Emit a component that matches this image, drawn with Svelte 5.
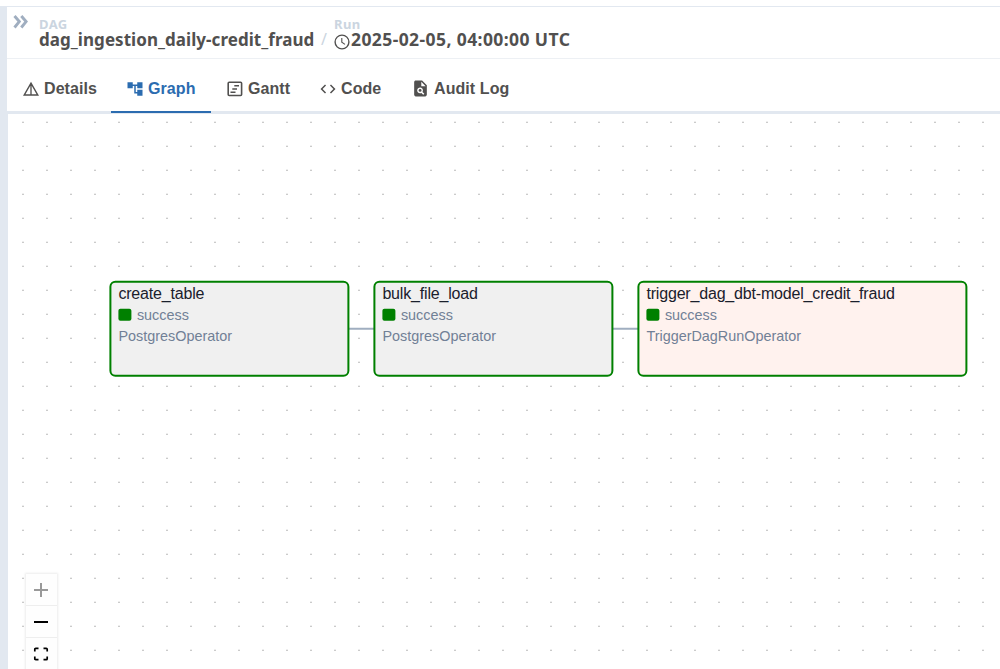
<script>
  const tabs = [
    { id: 'details', label: 'Details' },
    { id: 'graph', label: 'Graph' },
    { id: 'gantt', label: 'Gantt' },
    { id: 'code', label: 'Code' },
    { id: 'audit', label: 'Audit Log' },
  ];
  const active = 'graph';
  const nodes = [
    { id: 'create_table', op: 'PostgresOperator', x: 101, w: 240, bg: '#f0f0f0' },
    { id: 'bulk_file_load', op: 'PostgresOperator', x: 365, w: 240, bg: '#f0f0f0' },
    { id: 'trigger_dag_dbt-model_credit_fraud', op: 'TriggerDagRunOperator', x: 629, w: 330, bg: '#fff2ee' },
  ];
</script>

<div class="page">
  <div class="shell">
    <header>
      <svg class="expand" width="16" height="14" viewBox="0 0 16 14" fill="none" stroke="#a0aec0" stroke-width="2.9">
        <path d="M1.5 1L6.3 6.6L1.5 12.5M8.3 1L13.1 6.6L8.3 12.5" />
      </svg>
      <div class="crumb dag">
        <span class="kind">DAG</span>
        <span class="value name">dag_ingestion_daily-credit_fraud</span>
      </div>
      <span class="slash">/</span>
      <div class="crumb run">
        <span class="kind">Run</span>
        <span class="value">
          <svg class="clock" width="16" height="16" viewBox="0 0 16 16" fill="none" stroke="#51504f">
            <circle cx="8" cy="8" r="6.9" stroke-width="1.4" />
            <path d="M7.8 4V8.3L11 10.4" stroke-width="1.1" />
          </svg><span class="time">2025-02-05, 04:00:00 UTC</span>
        </span>
      </div>
    </header>

    <nav>
      {#each tabs as tab}
        <div class="tab {tab.id}" class:active={tab.id === active}>
          {#if tab.id === 'details'}
            <svg width="16" height="16" viewBox="0 0 24 24" fill="currentColor"><path d="M12 1L0 22h24L12 1zm-1 6v13H3.7L11 7zm2 0l7.3 13H13V7z" /></svg>
          {:else if tab.id === 'graph'}
            <svg width="18" height="18" viewBox="0 0 24 24" fill="currentColor"><path d="M22 11V3h-7v3H9V3H2v8h7V8h2v10h4v3h7v-8h-7v3h-2V8h2v3z" /></svg>
          {:else if tab.id === 'gantt'}
            <svg width="16" height="16" viewBox="0 0 16 16" fill="none" stroke="currentColor" stroke-width="1.6"><rect x="1.2" y="1.3" width="13.4" height="13.2" rx="1" /><path d="M7.3 4.8H12M5.3 8H10M3.5 11.2H8.5" stroke-width="1.5" /></svg>
          {:else if tab.id === 'code'}
            <svg width="18" height="18" viewBox="0 0 24 24" fill="currentColor"><path d="M9.4 16.6L4.8 12l4.6-4.6L8 6l-6 6 6 6 1.4-1.4zm5.2 0l4.6-4.6-4.6-4.6L16 6l6 6-6 6-1.4-1.4z" /></svg>
          {:else}
            <svg width="19" height="19" viewBox="0 0 24 24" fill="currentColor"><path fill-rule="evenodd" d="M14 2H6c-1.1 0-2 .9-2 2v16c0 1.1.9 2 2 2h12c1.1 0 2-.9 2-2V8l-6-6zm1.4 18l-2.3-2.3c-1.6.8-3.5.4-4.5-1-1.2-1.5-1-3.8.4-5 1.6-1.4 3.9-1.2 5.2.3 1 1.3 1.1 3 .3 4.3l2.4 2.3-1.5 1.4zM13 9V3.500L18.500 9H13z" /><circle cx="11.500" cy="14.400" r="1.800" /></svg>
          {/if}
          <span>{tab.label}</span>
        </div>
      {/each}
    </nav>

    <main>
      <svg class="dots" width="992" height="555">
        <defs>
          <pattern id="grid" x="14" y="7" width="24" height="24" patternUnits="userSpaceOnUse">
            <rect x="0" y="1" width="2" height="1" fill="#cbcbcb" />
            <rect x="0" y="0" width="2" height="1" fill="#eeeeee" />
          </pattern>
        </defs>
        <rect width="992" height="555" fill="url(#grid)" />
        <path d="M341 214.700H367M605 214.700H631" stroke="#a0aec0" stroke-width="2" />
      </svg>
      {#each nodes as node}
        <section class="node" style="left: {node.x}px; width: {node.w}px; background: {node.bg}">
          <div class="title">{node.id}</div>
          <div class="state"><i></i>success</div>
          <div class="operator">{node.op}</div>
        </section>
      {/each}
      <div class="controls">
        <button aria-label="zoom in"><svg width="16" height="16" viewBox="0 0 16 16"><path d="M1 8H15M8 1V15" stroke="#999" stroke-width="2" /></svg></button>
        <button aria-label="zoom out"><svg width="16" height="16" viewBox="0 0 16 16"><path d="M1 8H15" stroke="#000" stroke-width="2" /></svg></button>
        <button aria-label="fit view"><svg width="16" height="16" viewBox="0 0 16 16" fill="none" stroke="#000" stroke-width="1.700"><path d="M1.800 5.500V3.300Q1.800 2.300 2.800 2.300H5.500M10.500 2.300H13.200Q14.200 2.300 14.200 3.300V5.500M14.200 10.500V12.700Q14.200 13.700 13.200 13.700H10.500M5.500 13.700H2.800Q1.800 13.700 1.800 12.700V10.500" /></svg></button>
      </div>
    </main>
  </div>
</div>

<style>
  :global(body) { overflow: hidden; background: #fff; }
  .page { box-sizing: border-box; width: 1000px; height: 669px; padding-top: 6px; overflow: hidden; font-family: "Liberation Sans", Arial, sans-serif; color: #51504f; }
  .shell { box-sizing: border-box; height: 663px; border-top: 1px solid #e2e8f0; border-left: 7px solid #e2e8f0; display: flex; flex-direction: column; }
  header { box-sizing: border-box; height: 52px; flex: none; display: flex; align-items: flex-start; border-bottom: 1px solid #edf0f4; font-family: "Noto Sans", "Open Sans", sans-serif; font-weight: 700; }
  .expand { margin: 8px 0 0 6px; flex: none; }
  .crumb { display: flex; flex-direction: column; padding-top: 10px; }
  .dag { margin-left: 10px; width: 276px; }
  .kind { font-size: 13px; line-height: 14px; letter-spacing: .4px; color: #cbd5e0; font-weight: 700; }
  .value { display: flex; font-size: 17px; line-height: 17px; white-space: nowrap; }
  .name { letter-spacing: .05px; }
  .time { font-size: 17.500px; letter-spacing: .41px; }
  .slash { margin: 24px 0 0 6px; width: 13px; font-size: 16px; line-height: 17px; font-weight: 400; color: #cbd5e0; }
  .clock { margin: 3px 1px 0 0; flex: none; }
  nav { box-sizing: border-box; height: 55px; flex: none; display: flex; border-bottom: 3px solid #e2e8f0; font-size: 16px; font-weight: 700; letter-spacing: .08px; }
  .tab { box-sizing: border-box; height: 54px; display: flex; align-items: center; white-space: nowrap; border-bottom: 2px solid transparent; padding: 7px 0 0; }
  .tab svg { flex: none; }
  .details { padding-left: 16px; width: 104px; gap: 5px; }
  .graph { padding-left: 15px; width: 100px; gap: 4px; }
  .gantt { padding-left: 16px; width: 108px; gap: 5px; }
  .code { width: 92px; gap: 4px; }
  .audit { gap: 4px; }
  .active { color: #2b6cb0; border-color: #2b6cb0; }
  main { position: relative; flex: 1; border-left: 1px solid #e2e8f0; background: #fff; }
  .dots { display: block; position: absolute; left: 0; top: 0; }
  .node { position: absolute; top: 167px; box-sizing: border-box; height: 96px; border: 2px solid #008000; border-radius: 6px; padding: 1px 7px; transform: translate(.4px, -.2px); }
  .title { font-size: 16px; line-height: 20px; letter-spacing: -.18px; color: #1a202c; white-space: nowrap; }
  .state { display: flex; align-items: center; gap: 6px; font-size: 14.400px; line-height: 22px; color: #718096; }
  .state i { width: 12.500px; height: 12.500px; border-radius: 2px; background: #008000; }
  .operator { font-size: 14.400px; line-height: 21px; color: #718096; }
  .controls { position: absolute; left: 18px; top: 460px; width: 31px; display: flex; flex-direction: column; box-shadow: 0 0 2px 1px rgba(0, 0, 0, .08); }
  button { box-sizing: border-box; width: 31px; height: 32px; padding: 0 1px 0 0; border: 0; border-bottom: 1px solid #eee; background: #fefefe; display: flex; align-items: center; justify-content: center; }
</style>
